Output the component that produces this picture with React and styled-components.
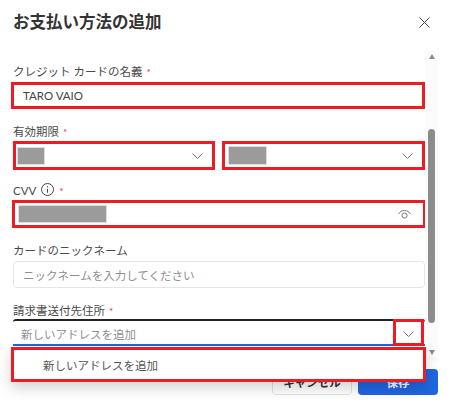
import React from "react";
import styled, { createGlobalStyle } from "styled-components";

const GlobalStyle = createGlobalStyle`
  html, body { margin: 0; padding: 0; background: #fff; }
  * { box-sizing: border-box; }
  body { font-family: Lato, "Noto Sans CJK JP", sans-serif; color: #222; }
`;

const RED = "#ed1c24";

const Dialog = styled.div`
  position: relative;
  width: 450px;
  height: 402px;
  overflow: hidden;
  display: flex;
  flex-direction: column;
  background: #fff;
`;

const Header = styled.header`
  height: 50px;
  flex: none;
  display: flex;
  align-items: flex-start;
  justify-content: space-between;
  padding: 12px 20px 0 13px;
`;

const Title = styled.h1`
  margin: 0;
  font-size: 16.5px;
  line-height: 20px;
  font-weight: 700;
  color: #333;
`;

const CloseButton = styled.button`
  border: 0;
  padding: 0;
  margin-top: 5px;
  background: none;
  width: 11px;
  height: 11px;
  display: flex;
`;

const Middle = styled.div`
  flex: none;
  height: 311px;
  display: flex;
  padding-right: 12px;
`;

const Form = styled.div`
  flex: 1;
  min-width: 0;
  padding: 14px 0 0 11px;
`;

const Label = styled.div`
  height: ${(p) => p.$height || "18px"};
  padding-left: 2px;
  font-size: 11.5px;
  line-height: 15px;
  color: #4a4a4a;
  display: flex;
  align-items: flex-start;
  gap: ${(p) => p.$gap || "4px"};
`;

const Req = styled.span`
  color: #d0343c;
  font-size: 10px;
  margin-top: 1px;
`;

const Row = styled.div`
  display: flex;
  justify-content: space-between;
  width: 414px;
  padding-left: 2px;
  margin-bottom: ${(p) => p.$gap || "0"};
`;

const Field = styled.div`
  width: ${(p) => p.$width || "414px"};
  height: ${(p) => p.$height || "27px"};
  margin-bottom: ${(p) => p.$gap || "0"};
  margin-left: ${(p) => p.$offset || "0"};
  border: ${(p) => (p.$marked ? `3px solid ${RED}` : "1px solid #e6e6e6")};
  border-radius: ${(p) => (p.$marked ? "0" : "4px")};
  display: flex;
  align-items: center;
  justify-content: space-between;
  padding: 0 ${(p) => p.$right || "9px"} 0 ${(p) => p.$left || "7px"};
  font-size: 11.5px;
  background: #fff;
`;

const Value = styled.span`
  color: #444;
`;

const Placeholder = styled.span`
  color: #8f8f8f;
`;

const Redacted = styled.span`
  display: block;
  width: ${(p) => p.$width};
  height: ${(p) => p.$height};
  background: #9b9b9b;
  outline: 1px solid #ddd;
`;

const AddressField = styled.div`
  position: relative;
  width: 412px;
  height: 27px;
  margin-left: 2px;
  border-top: 2px solid #222;
  border-bottom: 2px solid #1f66e0;
  border-radius: 3px 3px 0 0;
  display: flex;
  align-items: center;
  padding: 2px 0 0 8px;
  font-size: 11.5px;
`;

const ChevronBox = styled.div`
  position: absolute;
  right: 1px;
  top: -2px;
  width: 31px;
  height: 27px;
  padding-top: 2px;
  border: 3px solid ${RED};
  background: #fff;
  display: flex;
  align-items: center;
  justify-content: center;
`;

const ScrollTrack = styled.div`
  width: 13px;
  flex: none;
  background: #fbfbfb;
  display: flex;
  flex-direction: column;
  align-items: center;
  padding-top: 4px;
`;

const Arrow = styled.span`
  width: 0;
  height: 0;
  border-left: 3.5px solid transparent;
  border-right: 3.5px solid transparent;
  ${(p) => (p.$down ? "border-top" : "border-bottom")}: 5px solid #8a8a8a;
`;

const ScrollThumb = styled.div`
  width: 7px;
  height: 194px;
  margin: 70px 0 27px;
  border-radius: 4px;
  background: #8c8c8c;
`;

const Footer = styled.footer`
  flex: 1;
  display: flex;
  justify-content: flex-end;
  gap: 6px;
  padding: 8px 12px 0 0;
`;

const FooterButton = styled.button`
  width: 80px;
  height: 26px;
  padding: 0;
  border-radius: 4px;
  font-family: inherit;
  font-size: 11.5px;
  font-weight: 700;
  border: ${(p) => (p.$primary ? "0" : "1px solid #e2e2e2")};
  background: ${(p) => (p.$primary ? "#1f66e0" : "#fff")};
  color: ${(p) => (p.$primary ? "#fff" : "#333")};
`;

const Menu = styled.div`
  position: absolute;
  left: 11px;
  top: 347px;
  width: 415px;
  height: 35px;
  border: 3px solid ${RED};
  background: #fff;
  box-shadow: 0 6px 14px rgba(0, 0, 0, 0.18);
  display: flex;
  align-items: center;
  padding-left: 29px;
  font-size: 11.5px;
  color: #555;
`;

const Chevron = () => (
  <svg width="11" height="6" viewBox="0 0 11 6" fill="none" stroke="#777" strokeWidth="1">
    <path d="M.5.5l5 5 5-5" />
  </svg>
);

const CloseIcon = () => (
  <svg width="11" height="11" viewBox="0 0 11 11" fill="none" stroke="#444" strokeWidth="1">
    <path d="M.5.5l10 10M10.5.5l-10 10" />
  </svg>
);

const InfoIcon = () => (
  <svg width="13" height="13" viewBox="0 0 13 13" fill="none" stroke="#444" strokeWidth="1">
    <circle cx="6.5" cy="6.5" r="6" />
    <path d="M6.5 5.8v4M6.5 3.2v1.2" />
  </svg>
);

const EyeIcon = () => (
  <svg width="13" height="9" viewBox="0 0 13 9" fill="none" stroke="#777" strokeWidth="1">
    <path d="M.5 4C2 1.6 4 .5 6.5.5S11 1.6 12.5 4" />
    <circle cx="6.5" cy="5.5" r="2.6" />
  </svg>
);

export default function App() {
  return (
    <Dialog>
      <GlobalStyle />
      <Header>
        <Title>お支払い方法の追加</Title>
        <CloseButton aria-label="閉じる">
          <CloseIcon />
        </CloseButton>
      </Header>
      <Middle>
        <Form>
          <Label>
            クレジット カードの名義 <Req>*</Req>
          </Label>
          <Field $marked $width="414px" $gap="15px" $left="9px">
            <Value>TARO VAIO</Value>
          </Field>
          <Label $height="17px">
            有効期限 <Req>*</Req>
          </Label>
          <Row $gap="13px">
            <Field $marked $width="202px" $height="29px" $left="2px">
              <Redacted $width="26px" $height="16px" />
              <Chevron />
            </Field>
            <Field $marked $width="203px" $height="29px" $left="4px">
              <Redacted $width="37px" $height="17px" />
              <Chevron />
            </Field>
          </Row>
          <Label $height="17px" $gap="5px">
            CVV
            <InfoIcon />
            <Req>*</Req>
          </Label>
          <Field $marked $offset="1px" $height="28px" $gap="15px" $left="4px" $right="12px">
            <Redacted $width="87px" $height="16px" />
            <EyeIcon />
          </Field>
          <Label>カードのニックネーム</Label>
          <Row $gap="15px">
            <Field $width="412px" $left="9px" $height="27px">
              <Placeholder>ニックネームを入力してください</Placeholder>
            </Field>
          </Row>
          <Label $height="16px">
            請求書送付先住所 <Req>*</Req>
          </Label>
          <AddressField>
            <Placeholder>新しいアドレスを追加</Placeholder>
            <ChevronBox>
              <Chevron />
            </ChevronBox>
          </AddressField>
        </Form>
        <ScrollTrack>
          <Arrow />
          <ScrollThumb />
          <Arrow $down />
        </ScrollTrack>
      </Middle>
      <Footer>
        <FooterButton>キャンセル</FooterButton>
        <FooterButton $primary>保存</FooterButton>
      </Footer>
      <Menu>新しいアドレスを追加</Menu>
    </Dialog>
  );
}
